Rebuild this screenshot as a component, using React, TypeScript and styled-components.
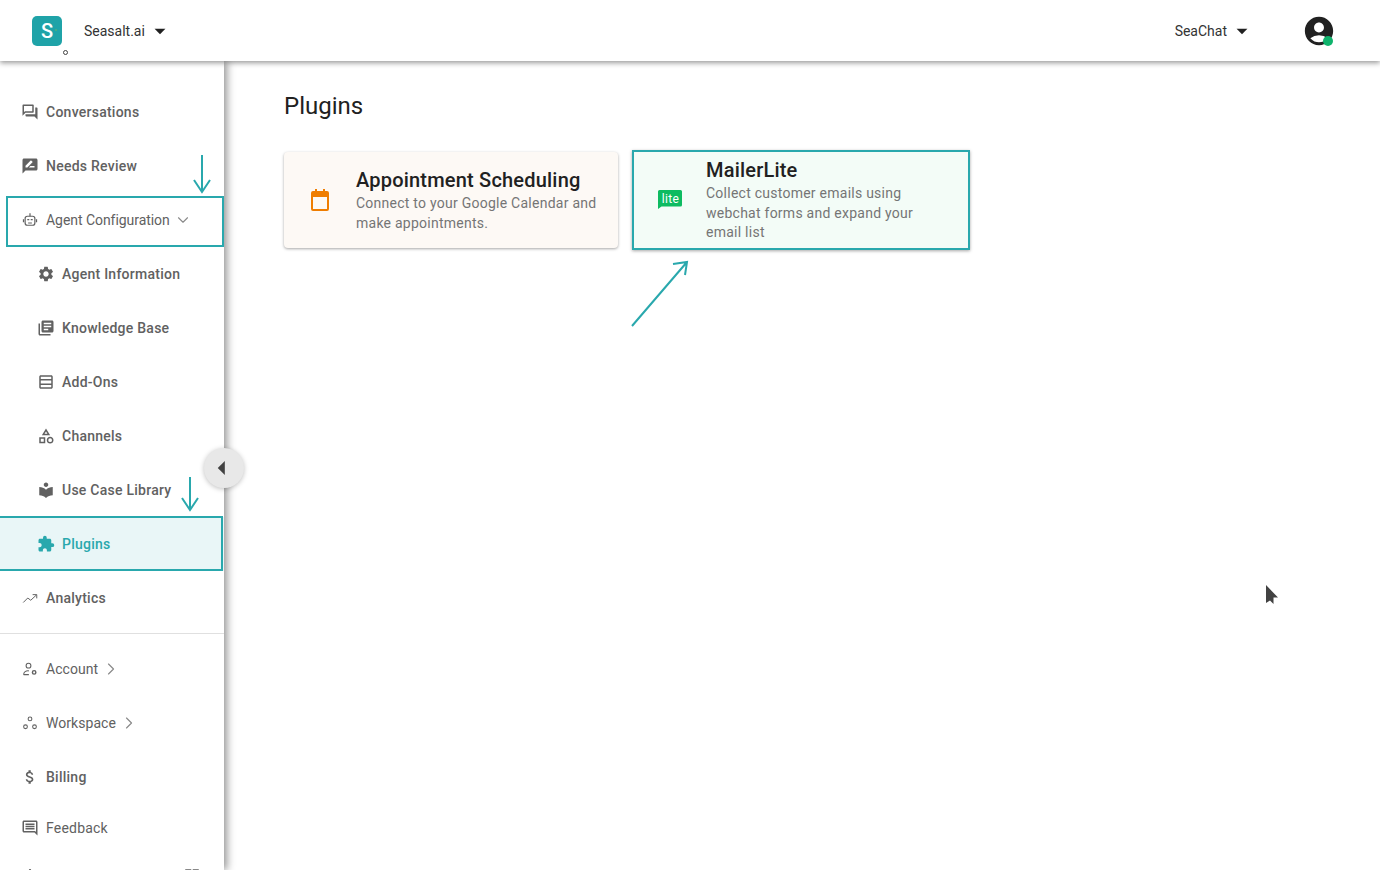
import { ReactNode } from "react";
import styled, { createGlobalStyle } from "styled-components";
import { ChevronDown, ChevronRight } from "lucide-react";
import {
  MdAccountCircle,
  MdArrowDropDown,
  MdArrowLeft,
  MdAttachMoney,
  MdExtension,
  MdGridView,
  MdLibraryBooks,
  MdLocalLibrary,
  MdOutlineCategory,
  MdOutlineComment,
  MdOutlineForum,
  MdOutlineNotifications,
  MdOutlineTableRows,
  MdRateReview,
  MdSettings,
} from "react-icons/md";

const TEAL = "#29a8ad";

const GlobalStyle = createGlobalStyle`
  html, body {
    margin: 0;
    height: 100%;
    overflow: hidden;
    background: #fff;
    font-family: Roboto, "Liberation Sans", sans-serif;
  }
`;

const Page = styled.div`
  position: relative;
  width: 1380px;
  height: 870px;
  overflow: hidden;
  display: flex;
  flex-direction: column;
`;

const TopBar = styled.header`
  position: relative;
  z-index: 3;
  flex: none;
  height: 61px;
  display: flex;
  align-items: center;
  padding: 0 44px 0 32px;
  background: #fff;
  box-shadow: 0 2px 5px rgba(0, 0, 0, 0.4);
`;

const Logo = styled.div`
  position: relative;
  width: 30px;
  height: 30px;
  border-radius: 5px;
  background: #1fa3a8;
  color: #fff;
  font-size: 20px;
  font-weight: 500;
  display: flex;
  align-items: center;
  justify-content: center;
  margin-right: 22px;

  &::before {
    content: "";
    position: absolute;
    left: 23px;
    top: 13px;
    width: 2px;
    height: 2px;
    border-radius: 50%;
    background: #4fb07a;
  }

  &::after {
    content: "";
    position: absolute;
    left: 31px;
    top: 34px;
    width: 3px;
    height: 3px;
    border: 1px solid #424242;
    border-radius: 50%;
  }
`;

const Switcher = styled.div`
  display: flex;
  align-items: center;
  font-size: 14px;
  color: #333;

  svg {
    font-size: 26px;
    color: #212121;
    margin-left: 2px;
  }
`;

const Spacer = styled.div`
  flex: 1;
`;

const Avatar = styled.div`
  position: relative;
  display: flex;
  margin-left: 47px;
  color: #212121;
  font-size: 34px;

  &::after {
    content: "";
    position: absolute;
    right: 3px;
    bottom: 2px;
    width: 10px;
    height: 10px;
    border-radius: 50%;
    background: #0fb36c;
  }
`;

const Body = styled.div`
  flex: 1;
  display: flex;
  min-height: 0;
`;

const Sidebar = styled.aside`
  position: relative;
  z-index: 2;
  flex: none;
  width: 224px;
  padding-top: 24px;
  background: #fff;
  box-shadow: 3px 0 8px rgba(0, 0, 0, 0.42);
`;

const Row = styled.div<{
  $height?: number;
  $nested?: boolean;
  $active?: boolean;
  $thin?: boolean;
  $tracking?: number;
}>`
  position: relative;
  height: ${(p) => p.$height ?? 54}px;
  display: flex;
  align-items: center;
  padding-left: ${(p) => (p.$nested ? 37 : 21)}px;
  font-size: 14px;
  font-weight: ${(p) => (p.$thin ? 400 : 500)};
  letter-spacing: ${(p) => p.$tracking ?? 0.25}px;
  color: ${(p) => (p.$active ? TEAL : "#616161")};
  background: ${(p) => (p.$active ? "#e9f6f7" : "transparent")};

  > svg:first-child {
    flex: none;
    width: 18px;
    height: 18px;
    margin-right: 7px;
  }
`;

const Chevron = styled.span<{ $gap: number }>`
  display: flex;
  margin-left: ${(p) => p.$gap}px;
  color: #8a8a8a;
`;

const RowEnd = styled.span`
  display: flex;
  margin-left: auto;
  padding-right: 23px;
  font-size: 18px;
`;

const Highlight = styled.div<{ $left: number; $top: number; $right: number; $bottom: number }>`
  position: absolute;
  left: ${(p) => p.$left}px;
  top: ${(p) => p.$top}px;
  right: ${(p) => p.$right}px;
  bottom: ${(p) => p.$bottom}px;
  border: 2px solid ${TEAL};
  pointer-events: none;
`;

const Divider = styled.hr`
  margin: 8px 0 8px;
  border: 0;
  border-top: 1px solid #e0e0e0;
`;

const Collapse = styled.button`
  position: absolute;
  left: 204px;
  top: 387px;
  width: 40px;
  height: 40px;
  padding: 0 4px 0 0;
  border: 0;
  border-radius: 50%;
  background: #e8e8e8;
  box-shadow: 0 1px 5px rgba(0, 0, 0, 0.25);
  color: #424242;
  font-size: 34px;
  display: flex;
  align-items: center;
  justify-content: center;
`;

const Main = styled.main`
  flex: 1;
  padding: 29px 0 0 60px;
`;

const Title = styled.h1`
  margin: 0 0 28px;
  font-size: 24px;
  line-height: 32px;
  font-weight: 400;
  color: #212121;
`;

const Cards = styled.div`
  display: flex;
  align-items: center;
  gap: 14px;
`;

const Card = styled.article<{ $tint: string; $marked?: boolean; $width: number; $height: number }>`
  box-sizing: border-box;
  width: ${(p) => p.$width}px;
  height: ${(p) => p.$height}px;
  display: flex;
  align-items: center;
  padding-left: 24px;
  background: ${(p) => p.$tint};
  border: ${(p) => (p.$marked ? `2px solid ${TEAL}` : "0")};
  border-radius: ${(p) => (p.$marked ? 0 : 4)}px;
  box-shadow: 0 1px 3px rgba(0, 0, 0, 0.35);
`;

const CardIcon = styled.div`
  flex: none;
  width: 24px;
  height: 24px;
  margin-right: 24px;
  display: flex;
`;

const CardText = styled.div`
  min-width: 0;
  padding-bottom: 1px;
`;

const CardTitle = styled.h2`
  margin: 0;
  font-size: 20px;
  line-height: 28px;
  font-weight: 500;
  letter-spacing: 0.2px;
  color: #212121;
`;

const CardDescription = styled.p`
  margin: 0;
  max-width: 245px;
  font-size: 14px;
  line-height: 19.5px;
  letter-spacing: 0.25px;
  color: #757575;
`;

const Annotation = styled.svg<{ $left: number; $top: number }>`
  position: absolute;
  z-index: 4;
  left: ${(p) => p.$left}px;
  top: ${(p) => p.$top}px;
  overflow: visible;
  fill: none;
  stroke: ${TEAL};
  stroke-width: 2;
`;

const Cursor = styled.svg`
  position: absolute;
  z-index: 4;
  left: 1265px;
  top: 584px;
`;

function CalendarIcon() {
  return (
    <svg width="24" height="24" viewBox="0 0 24 24" fill="#ef7d00">
      <path d="M7 1h2v3H7zM15 1h2v3h-2z" />
      <path d="M5 3h14a2 2 0 0 1 2 2v16a2 2 0 0 1-2 2H5a2 2 0 0 1-2-2V5a2 2 0 0 1 2-2zm0 6v12h14V9z" fillRule="evenodd" />
    </svg>
  );
}

function LiteIcon() {
  return (
    <svg width="24" height="24" viewBox="0 0 24 24">
      <path d="M1.5 2h21a1.5 1.5 0 0 1 1.5 1.5v13.5a1.5 1.5 0 0 1-1.5 1.5H3.5L0 21V3.5A1.5 1.5 0 0 1 1.5 2z" fill="#0dbb61" />
      <text x="12.5" y="14.8" textAnchor="middle" fontSize="12" fontWeight="400" letterSpacing="0.4" fill="#fff" fontFamily="Roboto, sans-serif">
        lite
      </text>
    </svg>
  );
}

function RobotIcon() {
  return (
    <svg viewBox="0 0 24 24" fill="none" stroke="currentColor" strokeWidth="1.6">
      <rect x="5.5" y="7" width="13" height="12" rx="3" />
      <path d="M12 3v4M3.3 11v4M20.7 11v4M9.5 16h5" />
      <path d="M9 11.5h1.4M13.6 11.5H15" strokeLinecap="round" />
    </svg>
  );
}

function TrendIcon() {
  return (
    <svg viewBox="0 0 24 24" fill="none" stroke="currentColor" strokeWidth="1.3">
      <path d="M3 18L9 12L13 15L20.5 8M15.5 7.5h5.5v5" />
    </svg>
  );
}

function AccountIcon() {
  return (
    <svg viewBox="0 0 24 24" fill="none" stroke="currentColor" strokeWidth="1.4">
      <circle cx="10" cy="7.5" r="3.2" />
      <path d="M3.5 19.5h7M3.5 19.5c0-3.5 3-5.5 7-5" />
      <circle cx="17.5" cy="16.5" r="2.3" strokeWidth="1.9" />
    </svg>
  );
}

function WorkspaceIcon() {
  return (
    <svg viewBox="0 0 24 24" fill="none" stroke="currentColor" strokeWidth="1.4">
      <circle cx="12" cy="6.5" r="2.5" />
      <circle cx="6" cy="17" r="2.5" />
      <circle cx="18" cy="17" r="2.5" />
    </svg>
  );
}

interface NavItem {
  icon: ReactNode;
  label: string;
  nested?: boolean;
  active?: boolean;
  thin?: boolean;
  tracking?: number;
  height?: number;
  after?: ReactNode;
  highlight?: [number, number, number, number];
}

const primary: NavItem[] = [
  { icon: <MdOutlineForum />, label: "Conversations" },
  { icon: <MdRateReview />, label: "Needs Review" },
  {
    icon: <RobotIcon />,
    label: "Agent Configuration",
    thin: true,
    tracking: -0.05,
    after: (
      <Chevron $gap={4}>
        <ChevronDown size={18} strokeWidth={1.5} />
      </Chevron>
    ),
    highlight: [6, 3, 0, 0],
  },
  { icon: <MdSettings />, label: "Agent Information", nested: true },
  { icon: <MdLibraryBooks />, label: "Knowledge Base", nested: true },
  { icon: <MdOutlineTableRows />, label: "Add-Ons", nested: true },
  { icon: <MdOutlineCategory />, label: "Channels", nested: true },
  { icon: <MdLocalLibrary />, label: "Use Case Library", nested: true },
  { icon: <MdExtension />, label: "Plugins", nested: true, active: true, highlight: [-2, -1, 1, 0] },
  { icon: <TrendIcon />, label: "Analytics" },
];

const secondary: NavItem[] = [
  {
    icon: <AccountIcon />,
    label: "Account",
    thin: true,
    tracking: 0.05,
    after: (
      <Chevron $gap={3}>
        <ChevronRight size={20} strokeWidth={1.4} />
      </Chevron>
    ),
  },
  {
    icon: <WorkspaceIcon />,
    label: "Workspace",
    thin: true,
    tracking: 0.05,
    after: (
      <Chevron $gap={3}>
        <ChevronRight size={20} strokeWidth={1.4} />
      </Chevron>
    ),
  },
  { icon: <MdAttachMoney />, label: "Billing" },
  { icon: <MdOutlineComment />, label: "Feedback", thin: true, tracking: 0.2, height: 48 },
  {
    icon: <MdOutlineNotifications />,
    label: "",
    height: 48,
    after: (
      <RowEnd>
        <MdGridView />
      </RowEnd>
    ),
  },
];

function NavRow({ item }: { item: NavItem }) {
  return (
    <Row
      $height={item.height}
      $nested={item.nested}
      $active={item.active}
      $thin={item.thin}
      $tracking={item.tracking}
    >
      {item.icon}
      {item.label}
      {item.after}
      {item.highlight && (
        <Highlight
          $left={item.highlight[0]}
          $top={item.highlight[1]}
          $right={item.highlight[2]}
          $bottom={item.highlight[3]}
        />
      )}
    </Row>
  );
}

export default function App() {
  return (
    <Page>
      <GlobalStyle />
      <TopBar>
        <Logo>S</Logo>
        <Switcher>
          Seasalt.ai
          <MdArrowDropDown />
        </Switcher>
        <Spacer />
        <Switcher>
          SeaChat
          <MdArrowDropDown />
        </Switcher>
        <Avatar>
          <MdAccountCircle />
        </Avatar>
      </TopBar>
      <Body>
        <Sidebar>
          {primary.map((item) => (
            <NavRow key={item.label} item={item} />
          ))}
          <Divider />
          {secondary.map((item) => (
            <NavRow key={item.label || "more"} item={item} />
          ))}
          <Collapse aria-label="Collapse">
            <MdArrowLeft />
          </Collapse>
        </Sidebar>
        <Main>
          <Title>Plugins</Title>
          <Cards>
            <Card $tint="#fdf9f5" $width={334} $height={96}>
              <CardIcon>
                <CalendarIcon />
              </CardIcon>
              <CardText>
                <CardTitle>Appointment Scheduling</CardTitle>
                <CardDescription>Connect to your Google Calendar and make appointments.</CardDescription>
              </CardText>
            </Card>
            <Card $tint="#f3fcf7" $marked $width={338} $height={100}>
              <CardIcon>
                <LiteIcon />
              </CardIcon>
              <CardText>
                <CardTitle>MailerLite</CardTitle>
                <CardDescription>Collect customer emails using webchat forms and expand your email list</CardDescription>
              </CardText>
            </Card>
          </Cards>
        </Main>
      </Body>
      <Annotation $left={202} $top={155} width="1" height="37">
        <path d="M0 0V37M-8 25L0 37L8 25" />
      </Annotation>
      <Annotation $left={190} $top={477} width="1" height="33">
        <path d="M0 0V33M-8 21L0 33L8 21" />
      </Annotation>
      <Annotation $left={632} $top={262} width="55" height="64">
        <path d="M0 64L55 0M41 2L55 0L53 13" />
      </Annotation>
      <Cursor width="14" height="22" viewBox="0 0 14 22">
        <path d="M1 1L13 13.5H8.5L8.5 20L5 16.5L1 19Z" fill="#424242" />
      </Cursor>
    </Page>
  );
}
